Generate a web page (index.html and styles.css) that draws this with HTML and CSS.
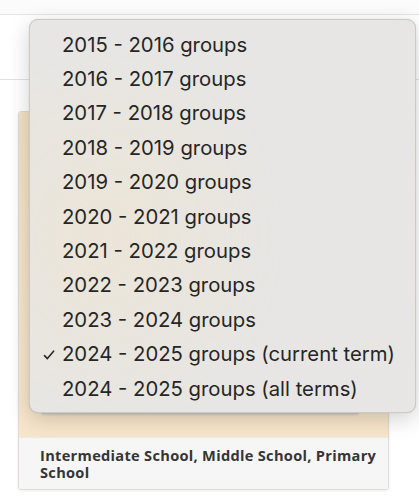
FILE: index.html
```html
<!DOCTYPE html>
<html lang="en">
<head>
<meta charset="utf-8">
<title>Groups</title>
<link rel="stylesheet" href="styles.css">
</head>
<body>
<div class="topbar"></div>
<div class="toolbar"></div>
<main class="content">
  <section class="card">
    <div class="card-art">
      <div class="select-box"></div>
    </div>
    <div class="card-foot">Intermediate School, Middle School, Primary School</div>
  </section>
</main>
<ul class="menu">
  <li class="menu-item">2015 - 2016 groups</li>
  <li class="menu-item">2016 - 2017 groups</li>
  <li class="menu-item">2017 - 2018 groups</li>
  <li class="menu-item">2018 - 2019 groups</li>
  <li class="menu-item">2019 - 2020 groups</li>
  <li class="menu-item">2020 - 2021 groups</li>
  <li class="menu-item">2021 - 2022 groups</li>
  <li class="menu-item">2022 - 2023 groups</li>
  <li class="menu-item">2023 - 2024 groups</li>
  <li class="menu-item checked"><svg class="check" viewBox="0 0 12 12" width="12" height="12"><path d="M1.5 6.6 L4.4 9.6 L10.6 2.2" fill="none" stroke="#2a2a2a" stroke-width="1.6" stroke-linecap="round" stroke-linejoin="round"/></svg>2024 - 2025 groups (current term)</li>
  <li class="menu-item">2024 - 2025 groups (all terms)</li>
</ul>
</body>
</html>
```
FILE: styles.css
```css
html, body {
  margin: 0;
  padding: 0;
  background: #ffffff;
  width: 419px;
  height: 500px;
  overflow: hidden;
  position: relative;
}

.topbar {
  height: 14px;
  background: #fbfbfb;
  border-bottom: 1px solid #e4e4e4;
}

.toolbar {
  height: 64px;
  background: #ffffff;
  border-bottom: 1px solid #e2e2e2;
}

.content {
  padding: 31px 30px 0 18px;
}

.card {
  border: 1px solid #e0dcd4;
  border-radius: 3px;
  box-shadow: 0 1px 3px rgba(0, 0, 0, 0.08);
  overflow: hidden;
}

.card-art {
  height: 325px;
  background: linear-gradient(180deg, #f2e1c4 0%, #f5e6cc 60%, #f8e6cb 100%);
  padding: 0 29px 23px 22px;
  display: flex;
  flex-direction: column;
  justify-content: flex-end;
  box-sizing: border-box;
}

.select-box {
  height: 34px;
  background: #fafafa;
  border: 1px solid #cfcfcf;
  border-radius: 2px;
  box-shadow: 0 1px 2px rgba(0, 0, 0, 0.12);
}

.card-foot {
  background: #f6f6f6;
  border-top: 1px solid #ebebeb;
  padding: 9px 3px 8px 21px;
  font-family: "Open Sans", "Liberation Sans", sans-serif;
  font-weight: 700;
  font-size: 14.6px;
  letter-spacing: 0.3px;
  line-height: 17px;
  color: #353535;
}

.menu {
  position: absolute;
  left: 29px;
  top: 19px;
  width: 387px;
  margin: 0;
  padding: 7px 0;
  list-style: none;
  box-sizing: border-box;
  background:
    radial-gradient(ellipse 180px 200px at 20% 55%, rgba(240, 228, 205, 0.55), rgba(240, 228, 205, 0) 100%),
    #e7e6e4;
  border: 1px solid rgba(0, 0, 0, 0.12);
  border-radius: 9px;
  box-shadow: 0 6px 22px rgba(0, 0, 0, 0.18), 0 0 1px rgba(0, 0, 0, 0.2);
}

.menu-item {
  position: relative;
  height: 34.4px;
  display: flex;
  align-items: center;
  padding-left: 32px;
  font-family: Inter, "Noto Sans", sans-serif;
  font-size: 20.3px;
  color: #262626;
  white-space: nowrap;
}

.check {
  position: absolute;
  left: 13px;
  top: 12px;
}
```
